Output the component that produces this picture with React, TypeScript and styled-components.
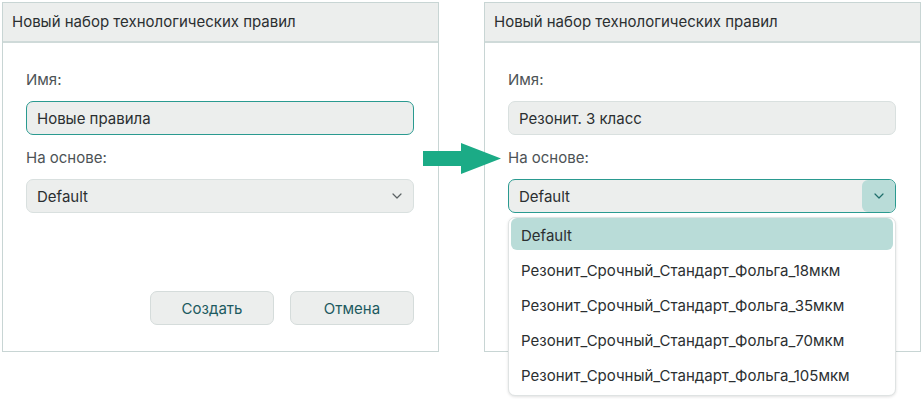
import React from 'react'
import styled, { createGlobalStyle } from 'styled-components'

const GlobalStyle = createGlobalStyle`
    html, body {
        margin: 0;
        padding: 0;
        background: #fff;
    }
    body {
        font-family: Inter, 'Noto Sans', sans-serif;
        font-size: 15px;
        color: #2b2f31;
    }
`

const options = [
    'Default',
    'Резонит_Срочный_Стандарт_Фольга_18мкм',
    'Резонит_Срочный_Стандарт_Фольга_35мкм',
    'Резонит_Срочный_Стандарт_Фольга_70мкм',
    'Резонит_Срочный_Стандарт_Фольга_105мкм',
]

const Chevron: React.FC = () => (
    <svg width='10' height='6' viewBox='0 0 10 6' fill='none'>
        <path d='M1 1l4 4 4-4' stroke='currentColor' strokeWidth='1.2' strokeLinecap='round' strokeLinejoin='round' />
    </svg>
)

type DialogProps = {
    name: string
    nameFocused?: boolean
    open?: boolean
}

const Dialog: React.FC<DialogProps> = ({ name, nameFocused, open }) => (
    <DialogStyled>
        <Header>Новый набор технологических правил</Header>
        <Body>
            <Label>Имя:</Label>
            <Input $focused={nameFocused}>{name}</Input>
            <Label>На основе:</Label>
            <SelectWrap>
                <Select $open={open}>
                    <span>Default</span>
                    <Caret $open={open}>
                        <Chevron />
                    </Caret>
                </Select>
                {open && (
                    <Menu>
                        {options.map((o, i) => (
                            <MenuItem key={o} $active={i === 0}>
                                {o}
                            </MenuItem>
                        ))}
                    </Menu>
                )}
            </SelectWrap>
            <Actions>
                <Button>Создать</Button>
                <Button>Отмена</Button>
            </Actions>
        </Body>
    </DialogStyled>
)

const App: React.FC = () => (
    <>
        <GlobalStyle />
        <Page>
            <Dialog name='Новые правила' nameFocused />
            <Dialog name='Резонит. 3 класс' open />
            <Arrow width='78' height='31' viewBox='0 0 78 31'>
                <path d='M0 8h38V0l40 15.5L38 31v-8H0z' fill='#1bab86' />
            </Arrow>
        </Page>
    </>
)

const Page = styled.div`
    position: relative;
    display: flex;
    align-items: flex-start;
    gap: 45px;
    padding: 2px;
    width: 924px;
    height: 399px;
    box-sizing: border-box;
`

const Arrow = styled.svg`
    position: absolute;
    left: 423px;
    top: 143px;
`

const DialogStyled = styled.div`
    width: 437px;
    height: 350px;
    box-sizing: border-box;
    border: 1px solid #c8d5d4;
    display: flex;
    flex-direction: column;
    background: #fff;
`

const Header = styled.div`
    height: 40px;
    box-sizing: border-box;
    padding: 0 9px 1px;
    display: flex;
    align-items: center;
    background: #eceeed;
    border-bottom: 2px solid #cfdad9;
    color: #2b2f31;
    font-size: 15px;
`

const Body = styled.div`
    flex: 1;
    display: flex;
    flex-direction: column;
    padding: 28px 24px 26px 23px;
`

const Label = styled.div`
    color: #4d5356;
    font-size: 15px;
    line-height: 18px;
    margin-bottom: 12px;
`

const Input = styled.div<{ $focused?: boolean }>`
    height: 34px;
    box-sizing: border-box;
    border: 1px solid ${(p) => (p.$focused ? '#2a9a90' : '#d9e0df')};
    border-radius: 7px;
    background: #eceeed;
    padding: 0 10px;
    display: flex;
    align-items: center;
    font-size: 15px;
    color: #2b2f31;
    margin-bottom: 14px;
`

const SelectWrap = styled.div`
    position: relative;
`

const Select = styled.div<{ $open?: boolean }>`
    height: 34px;
    box-sizing: border-box;
    border: 1px solid ${(p) => (p.$open ? '#2a9a90' : '#d9e0df')};
    border-radius: 7px;
    background: #eceeed;
    padding-left: 10px;
    display: flex;
    align-items: center;
    justify-content: space-between;
    overflow: hidden;
    font-size: 15px;
    color: #2b2f31;
`

const Caret = styled.div<{ $open?: boolean }>`
    width: 33px;
    height: 100%;
    display: flex;
    align-items: center;
    justify-content: center;
    color: ${(p) => (p.$open ? '#1f6f6c' : '#5b6264')};
    background: ${(p) => (p.$open ? '#b9dcd8' : 'transparent')};
    border-radius: 6px;
`

const Menu = styled.div`
    position: absolute;
    left: 0;
    right: 0;
    top: 38px;
    z-index: 2;
    background: #fff;
    border: 1px solid #dfe3e3;
    border-radius: 7px;
    box-shadow: 0 1px 3px rgba(0, 0, 0, 0.12);
    padding: 0 2px 3px;
    display: flex;
    flex-direction: column;
`

const MenuItem = styled.div<{ $active?: boolean }>`
    height: 35px;
    box-sizing: border-box;
    flex-shrink: 0;
    display: flex;
    align-items: center;
    padding: 2px 10px 0;
    border-radius: 6px;
    background: ${(p) => (p.$active ? '#b9dcd8' : 'transparent')};
    color: #2b2f31;
    font-size: 15px;
    &:first-child {
        height: 32px;
        padding-top: 3px;
        margin-bottom: 2px;
    }
`

const Actions = styled.div`
    margin-top: auto;
    display: flex;
    justify-content: flex-end;
    gap: 16px;
`

const Button = styled.button`
    width: 124px;
    height: 34px;
    box-sizing: border-box;
    border: 1px solid #d5dcdb;
    border-radius: 7px;
    background: #eceeed;
    color: #1d5a60;
    font-family: inherit;
    font-size: 15px;
    cursor: pointer;
`

export default App
